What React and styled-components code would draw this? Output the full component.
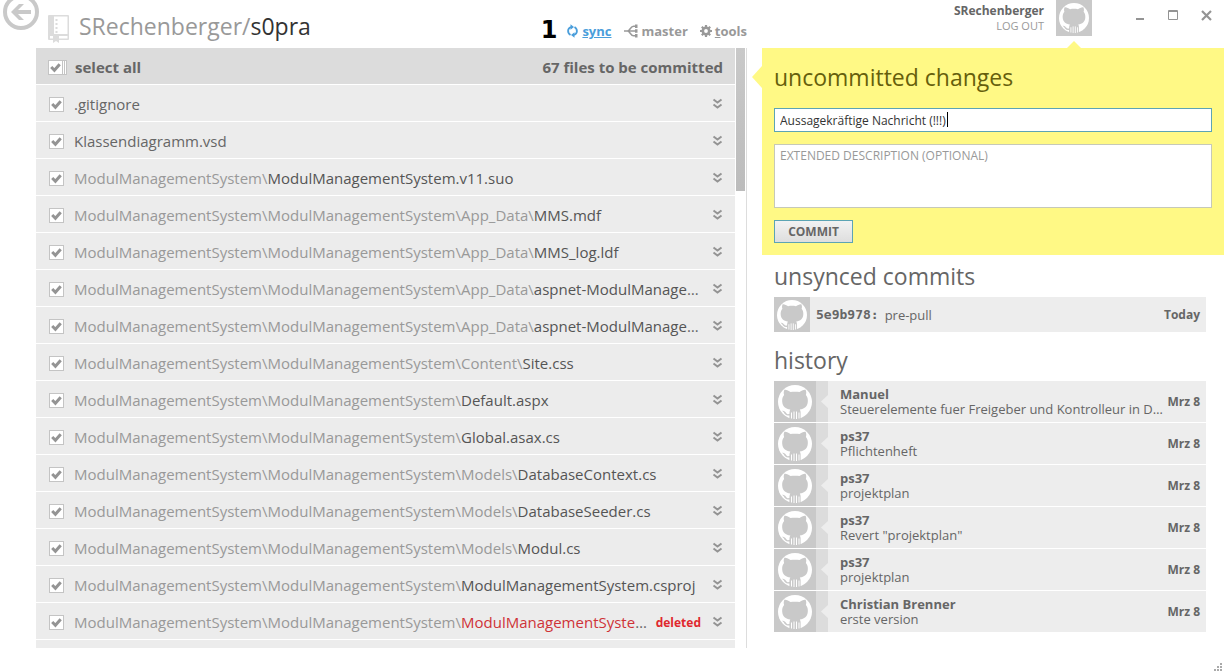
import React from "react";
import styled, { createGlobalStyle, css } from "styled-components";

const GlobalStyle = createGlobalStyle`
  * { box-sizing: border-box; }
  body {
    margin: 0;
    background: #fff;
    color: #666;
    font-family: "Open Sans", "Noto Sans", sans-serif;
    font-size: 15px;
  }
  button, input, textarea { font-family: inherit; }
`;

const Window = styled.div`
  display: grid;
  grid-template-columns: minmax(0, 1fr) 462px;
  height: 100vh;
  overflow: hidden;
`;

const Column = styled.div`
  display: flex;
  flex-direction: column;
  min-width: 0;
  min-height: 0;
`;

const RepoHeader = styled.header`
  display: flex;
  align-items: flex-start;
  height: 48px;
  padding: 0 15px 0 2px;
  flex: none;
`;

const BackButton = styled.button`
  width: 38px;
  height: 32px;
  padding: 0;
  border: 0;
  background: none;
  svg { display: block; }
`;

const RepoIcon = styled.svg`
  margin: 15px 0 0 8px;
  flex: none;
`;

const RepoTitle = styled.h1`
  margin: 9px auto 0 9px;
  font-size: 23px;
  line-height: 34px;
  font-weight: 400;
  color: #999;
  white-space: nowrap;
  strong { font-weight: 400; color: #333; }
`;

const StepNumber = styled.span`
  margin: 15px 10px 0 0;
  font-family: "DejaVu Sans", sans-serif;
  font-weight: 700;
  font-size: 24px;
  line-height: 30px;
  color: #000;
`;

const Tools = styled.nav`
  display: flex;
  gap: 12px;
  margin-top: 21px;
`;

const ToolButton = styled.button`
  display: flex;
  align-items: center;
  gap: ${(p) => (p.$active ? 4 : 3)}px;
  height: 20px;
  padding: 0;
  border: 0;
  background: none;
  font-size: 13px;
  line-height: 20px;
  font-weight: 700;
  color: ${(p) => (p.$active ? "#4a9edb" : "#999")};
  svg { flex: none; }
`;

const FilesArea = styled.main`
  display: flex;
  height: calc(100vh - 72px);
  margin: 0 15px 0 36px;
  border-right: 1px solid #ddd;
`;

const FileList = styled.div`
  flex: 1;
  min-width: 0;
  overflow: hidden;
  display: flex;
  flex-direction: column;
  gap: 1px;
`;

const Scrollbar = styled.div`
  width: 9px;
  height: 143px;
  margin: 0 1px;
  background: linear-gradient(#c9c9c9, #bcbcbc);
`;

const FileRow = styled.div`
  display: flex;
  align-items: center;
  flex: none;
  height: 36px;
  padding: 2px 12px 0 13px;
  background: #ececec;
`;

const ListHeader = styled(FileRow)`
  padding-left: 12px;
  background: #dcdcdc;
  font-weight: 700;
  justify-content: space-between;
`;

const CheckLabel = styled.label`
  display: flex;
  align-items: center;
  gap: ${(p) => (p.$all ? 8 : 10)}px;
  flex: 1;
  min-width: 0;
`;

const CheckCell = styled.span`
  display: grid;
  flex: none;
  > * { grid-area: 1 / 1; }
  svg { pointer-events: none; align-self: center; }
`;

const CheckInput = styled.input`
  appearance: none;
  width: ${(p) => (p.$all ? 19 : 15)}px;
  height: 15px;
  margin: 0;
  border: 1px solid #c4c4c4;
  background: #fff;
`;

const FileName = styled.span`
  flex: 1;
  min-width: 0;
  overflow: hidden;
  text-overflow: ellipsis;
  white-space: nowrap;
  line-height: 24px;
`;

const Directory = styled.span`
  color: #999;
`;

const BaseName = styled.span`
  color: ${(p) => (p.$deleted ? "#cf3338" : p.$nested ? "#555" : "#666")};
`;

const DeletedTag = styled.span`
  margin-left: 6px;
  font-size: 12px;
  font-weight: 700;
  color: #e0282e;
`;

const ExpandButton = styled.button`
  width: 11px;
  height: 12px;
  margin-left: 11px;
  padding: 0;
  border: 0;
  background: none;
  flex: none;
  svg { display: block; }
`;

const AccountBar = styled.header`
  display: flex;
  justify-content: flex-end;
  height: 48px;
  flex: none;
`;

const Account = styled.div`
  display: flex;
  flex-direction: column;
  align-items: flex-end;
  padding-top: 3px;
  margin-right: 12px;
  font-size: 12px;
  line-height: 16px;
`;

const LogOut = styled.a`
  font-size: 11px;
  line-height: 14px;
  color: #999;
  text-decoration: none;
`;

const AccountAvatar = styled.div`
  display: flex;
  flex-direction: column;
  align-items: center;
  justify-content: space-between;
  width: 36px;
  height: 48px;
`;

const Avatar = styled.span`
  display: flex;
  align-items: center;
  justify-content: center;
  flex: none;
  width: ${(p) => p.$width}px;
  height: ${(p) => p.$height}px;
  background: #c9c9c9;
`;

const WindowButtons = styled.div`
  display: flex;
  gap: 22px;
  margin: 10px 12px 0 43px;
`;

const WindowButton = styled.button`
  width: 11px;
  height: 11px;
  padding: 0;
  border: 0;
  background: none;
  svg { display: block; }
`;

const CommitPanel = styled.form`
  position: relative;
  display: flex;
  flex-direction: column;
  align-items: flex-start;
  padding: 11px 12px 12px;
  background: #fff985;
`;

const PanelPointer = styled.svg`
  position: absolute;
  left: -10px;
  top: 18px;
`;

const Heading = styled.h2`
  margin: 0;
  font-size: 23px;
  line-height: 36px;
  font-weight: 400;
  color: ${(p) => (p.$dark ? "#665f0c" : "#666")};
`;

const field = css`
  display: block;
  width: 100%;
  background: #fff;
  border-radius: 0;
  outline: 0;
  font-size: 12px;
  padding: 0 5px;
`;

const SummaryField = styled.div`
  position: relative;
  width: 100%;
  margin-top: 13px;
`;

const SummaryInput = styled.input`
  ${field}
  height: 24px;
  border: 1px solid #5ca4b4;
  color: #333;
  caret-color: transparent;
`;

const TextCaret = styled.span`
  position: absolute;
  left: 173px;
  top: 4px;
  width: 1px;
  height: 15px;
  background: #000;
`;

const DescriptionInput = styled.textarea`
  ${field}
  height: 64px;
  margin: 12px 0;
  padding-top: 3px;
  border: 1px solid #c6c9b8;
  line-height: 16px;
  resize: none;
  &::placeholder { color: #999; opacity: 1; }
`;

const CommitButton = styled.button`
  width: 79px;
  height: 23px;
  padding: 0;
  border: 1px solid #5ca4b4;
  background: linear-gradient(#f2f2f2, #dedede);
  font-size: 12px;
  font-weight: 700;
  color: #666;
`;

const Section = styled.section`
  padding: 3px 18px 0 12px;
  & + & { padding-top: 10px; }
`;

const UnsyncedRow = styled.article`
  display: flex;
  align-items: center;
  height: 35px;
  margin-top: 3px;
  padding-right: 6px;
  background: #ededed;
  font-size: 13px;
`;

const Hash = styled.code`
  margin: 0 6px;
  font-family: "DejaVu Sans Mono", monospace;
  font-size: 13px;
  font-weight: 700;
`;

const DateText = styled.time`
  margin-left: auto;
  padding-left: 3px;
  flex: none;
  font-size: 12px;
  font-weight: 700;
`;

const HistoryList = styled.ul`
  display: flex;
  flex-direction: column;
  gap: 1px;
  margin: 3px 0 0;
  padding: 0;
  list-style: none;
`;

const HistoryRow = styled.li`
  display: flex;
  align-items: center;
  height: 41px;
  padding-right: 6px;
  background: #ededed;
`;

const Notch = styled.svg`
  flex: none;
  margin-right: 12px;
`;

const CommitText = styled.div`
  flex: 1;
  min-width: 0;
  font-size: 13px;
  line-height: 15px;
`;

const Author = styled.div`
  font-weight: 700;
`;

const Message = styled.div`
  overflow: hidden;
  text-overflow: ellipsis;
  white-space: nowrap;
`;

const StatusBar = styled.footer`
  display: flex;
  justify-content: flex-end;
  margin-top: auto;
  padding-right: 1px;
`;

const Octocat = ({ size }) => (
  <svg width={size} height={size} viewBox="0 0 34 34" aria-hidden="true">
    <circle cx="17" cy="17" r="17" fill="#fff" />
    <path
      fill="#c9c9c9"
      d="M6.400 4.800C8.500 4.500 10.700 5.800 12.500 7.100c2.900-.6 6.100-.6 9 0C23.300 5.800 25.500 4.500 27.600 4.800c.9 2 .8 3.700.3 5.200 1.600 1.900 2.100 4.200 1.900 6.700-.4 4.800-3.400 7.100-8 7.700.6.900.8 1.900.8 3.100V34H11.400v-3.500c-3.400.5-4.500-1-5.500-2.900-.5-.8-1.300-1.300-1.900-1.800 1.800-.5 3.200.7 4.100 2.100.9 1.200 1.800 1.500 3.300 1.100.1-1.900.2-3.200.9-4.600-4.700-.6-7.700-2.900-8.100-7.700-.2-2.600.3-4.900 1.900-6.700-.5-1.500-.6-3.200.3-5.200z"
    />
    <path
      d="M13.500 27.500v6M16 26.500v7.500M18.500 26.500v7.500M21 27.500v6"
      stroke="#fff"
      strokeWidth="1"
    />
  </svg>
);

const Check = ({ all, ...props }) => (
  <CheckCell>
    <CheckInput type="checkbox" defaultChecked $all={all} {...props} />
    <svg width={all ? 19 : 15} height="15" viewBox={all ? "0 0 19 15" : "0 0 15 15"}>
      <path d="M3.200 7l3.200 3.200 5.300-6" fill="none" stroke="#949494" strokeWidth="3" />
      {all && <path d="M14.500 1v13M16.500 1v13" stroke="#c4c4c4" />}
    </svg>
  </CheckCell>
);

const root = "ModulManagementSystem\\";
const app = root + root;
const files = [
  ["", ".gitignore"],
  ["", "Klassendiagramm.vsd"],
  [root, "ModulManagementSystem.v11.suo"],
  [app + "App_Data\\", "MMS.mdf"],
  [app + "App_Data\\", "MMS_log.ldf"],
  [app + "App_Data\\", "aspnet-ModulManagementSystem.mdf"],
  [app + "App_Data\\", "aspnet-ModulManagementSystem_log.ldf"],
  [app + "Content\\", "Site.css"],
  [app, "Default.aspx"],
  [app, "Global.asax.cs"],
  [app + "Models\\", "DatabaseContext.cs"],
  [app + "Models\\", "DatabaseSeeder.cs"],
  [app + "Models\\", "Modul.cs"],
  [app, "ModulManagementSystem.csproj"],
  [app, "ModulManagementSystem.csproj.user", true],
];

const history = [
  ["Manuel", "Steuerelemente fuer Freigeber und Kontrolleur in Datenbank"],
  ["ps37", "Pflichtenheft"],
  ["ps37", "projektplan"],
  ["ps37", 'Revert "projektplan"'],
  ["ps37", "projektplan"],
  ["Christian Brenner", "erste version"],
];

export default function App() {
  return (
    <>
      <GlobalStyle />
      <Window>
        <Column>
          <RepoHeader>
            <BackButton aria-label="Back">
              <svg width="38" height="32" viewBox="0 0 38 32">
                <circle cx="19" cy="12" r="16" fill="none" stroke="#c9c9c9" strokeWidth="4" />
                <path d="M9 12l8-8h5l-6 6h13v4H16l6 6h-5z" fill="#c9c9c9" />
              </svg>
            </BackButton>
            <RepoIcon width="22" height="28" viewBox="0 0 22 28">
              <path fill="#dcdcdc" fillRule="evenodd" d="M1 0h19q1 0 1 1v23q0 1-1 1h-9v3l-3-2-3 2v-3H1q-1 0-1-1V1q0-1 1-1zM6 1.500V19h13.500V1.500zM2 21v2.500h3V21zM11 21v2.500h8.500V21z" />
              <path d="M8.500 4v14" stroke="#dcdcdc" strokeWidth="2" strokeDasharray="2 2" />
            </RepoIcon>
            <RepoTitle>SRechenberger/<strong>s0pra</strong></RepoTitle>
            <StepNumber>1</StepNumber>
            <Tools>
              <ToolButton $active>
                <svg width="11" height="14" viewBox="0 0 11 14" fill="none" stroke="currentColor" strokeWidth="1.800">
                  <path d="M3.500 11C.2 9 .2 4.500 4 3M7.500 3c3.300 2 3.300 6.500-.5 8" />
                  <path d="M3.500.2L7 3 3.500 5.800zM7.500 8.200L4 11l3.500 2.800z" fill="currentColor" stroke="none" />
                </svg>
                <u>sync</u>
              </ToolButton>
              <ToolButton>
                <svg width="15" height="14" viewBox="0 0 15 14" fill="none" stroke="currentColor" strokeWidth="1.500">
                  <path d="M0 7h13M3.500 7C6 7 6.500 2.200 9.500 2.200H13M3.500 7c2.500 0 3 4.800 6 4.800H13" />
                  <path d="M11 .5h2.500v3.400H11zM11 5.300h2.500v3.400H11zM11 10.100h2.500v3.400H11z" fill="currentColor" stroke="none" />
                </svg>
                <span>master</span>
              </ToolButton>
              <ToolButton>
                <svg width="12" height="12" viewBox="0 0 12 12" fill="none" stroke="currentColor">
                  <circle cx="6" cy="6" r="3.200" strokeWidth="2.600" />
                  <path d="M6 0v2.500M6 9.500V12M0 6h2.500M9.500 6H12M1.800 1.800l1.700 1.700M8.500 8.500l1.700 1.700M10.200 1.800L8.500 3.500M3.500 8.500l-1.700 1.700" strokeWidth="2.200" />
                </svg>
                <span><u>t</u>ools</span>
              </ToolButton>
            </Tools>
          </RepoHeader>
          <FilesArea>
            <FileList>
              <ListHeader>
                <CheckLabel $all><Check all />select all</CheckLabel>
                <span>67 files to be committed</span>
              </ListHeader>
              {files.map(([dir, name, deleted]) => (
                <FileRow key={dir + name}>
                  <CheckLabel>
                    <Check />
                    <FileName>
                      <Directory>{dir}</Directory>
                      <BaseName $nested={dir !== ""} $deleted={deleted}>{name}</BaseName>
                    </FileName>
                  </CheckLabel>
                  {deleted && <DeletedTag>deleted</DeletedTag>}
                  <ExpandButton aria-label={"Show changes in " + name}>
                    <svg width="11" height="12" viewBox="0 0 11 12" fill="none" stroke="#949494" strokeWidth="2">
                      <path d="M1.500 1.500l4 3 4-3M1.500 6.500l4 3 4-3" />
                    </svg>
                  </ExpandButton>
                </FileRow>
              ))}
              <FileRow />
            </FileList>
            <Scrollbar />
          </FilesArea>
        </Column>
        <Column>
          <AccountBar>
            <Account>
              <strong>SRechenberger</strong>
              <LogOut href="#logout">LOG OUT</LogOut>
            </Account>
            <AccountAvatar>
              <Avatar $width={36} $height={36}><Octocat size={30} /></Avatar>
              <svg width="14" height="7" viewBox="0 0 14 7"><path d="M0 7l7-7 7 7z" fill="#fff985" /></svg>
            </AccountAvatar>
            <WindowButtons>
              <WindowButton aria-label="Minimize">
                <svg width="11" height="11"><path d="M1 9h8" stroke="#949494" strokeWidth="2" /></svg>
              </WindowButton>
              <WindowButton aria-label="Maximize">
                <svg width="11" height="11"><path d="M.5.5h9v9h-9zM0 1.500h10" fill="none" stroke="#949494" /></svg>
              </WindowButton>
              <WindowButton aria-label="Close">
                <svg width="11" height="11"><path d="M1 1l9 9M10 1L1 10" stroke="#949494" strokeWidth="2.200" /></svg>
              </WindowButton>
            </WindowButtons>
          </AccountBar>
          <CommitPanel onSubmit={(e) => e.preventDefault()}>
            <PanelPointer width="10" height="22" viewBox="0 0 10 22"><path d="M10 0L0 11l10 11z" fill="#fff985" /></PanelPointer>
            <Heading $dark>uncommitted changes</Heading>
            <SummaryField>
              <SummaryInput aria-label="Summary" defaultValue="Aussagekräftige Nachricht (!!!)" />
              <TextCaret />
            </SummaryField>
            <DescriptionInput aria-label="Extended description" placeholder="EXTENDED DESCRIPTION (OPTIONAL)" />
            <CommitButton>COMMIT</CommitButton>
          </CommitPanel>
          <Section>
            <Heading>unsynced commits</Heading>
            <UnsyncedRow>
              <Avatar $width={36} $height={35}><Octocat size={30} /></Avatar>
              <Hash>5e9b978:</Hash>
              <span>pre-pull</span>
              <DateText>Today</DateText>
            </UnsyncedRow>
          </Section>
          <Section>
            <Heading>history</Heading>
            <HistoryList>
              {history.map(([author, message], i) => (
                <HistoryRow key={i}>
                  <Avatar $width={42} $height={41}><Octocat size={34} /></Avatar>
                  <Notch width="12" height="41" viewBox="0 0 12 41">
                    <path d="M0 0h12v14l-7 6.500 7 6.500v14H0z" fill="#dcdcdc" />
                  </Notch>
                  <CommitText>
                    <Author>{author}</Author>
                    <Message>{message}</Message>
                  </CommitText>
                  <DateText>Mrz 8</DateText>
                </HistoryRow>
              ))}
            </HistoryList>
          </Section>
          <StatusBar>
            <svg width="10" height="10" viewBox="0 0 10 10" fill="#aaa">
              <path d="M7 1h2v2H7zM4 4h2v2H4zM7 4h2v2H7zM1 7h2v2H1zM4 7h2v2H4zM7 7h2v2H7z" />
            </svg>
          </StatusBar>
        </Column>
      </Window>
    </>
  );
}
